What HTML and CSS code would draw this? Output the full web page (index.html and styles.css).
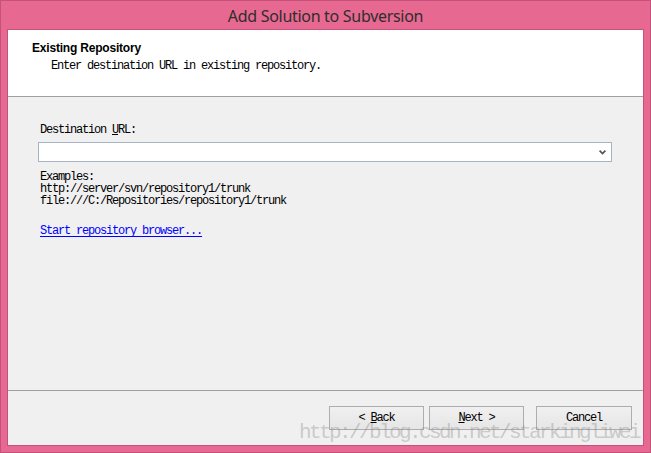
FILE: index.html
```html
<!DOCTYPE html>
<html>
<head>
<meta charset="utf-8">
<title>Add Solution to Subversion</title>
<link rel="stylesheet" href="styles.css">
</head>
<body>
<div class="window">
  <div class="titlebar">Add Solution to Subversion</div>
  <div class="client">
    <div class="header">
      <div class="header-title">Existing Repository</div>
      <div class="header-sub">Enter destination URL in existing repository.</div>
    </div>
    <div class="body">
      <div class="label">Destination <u>U</u>RL:</div>
      <div class="combo">
        <svg class="chevron" width="7" height="5" viewBox="0 0 7 5"><path d="M0.6 0.6 L3.5 3.6 L6.4 0.6" fill="none" stroke="#555" stroke-width="1.7"/></svg>
      </div>
      <div class="examples">
        <div>Examples:</div>
        <div>http://server/svn/repository1/trunk</div>
        <div>file:///C:/Repositories/repository1/trunk</div>
      </div>
      <a class="link" href="#">Start repository browser...</a>
    </div>
    <div class="footer">
      <div class="btn-group">
        <button class="btn">&lt; <u>B</u>ack</button>
        <button class="btn"><u>N</u>ext &gt;</button>
      </div>
      <button class="btn btn-cancel">Cancel</button>
    </div>
  </div>
  <div class="watermark">http://blog.csdn.net/starkingliwei</div>
</div>
</body>
</html>
```

FILE: styles.css
```css
html, body {
  margin: 0;
  padding: 0;
  background: #e76991;
}

.window {
  position: relative;
  width: 651px;
  height: 453px;
  box-sizing: border-box;
  border: 1px solid #c4527b;
  background: #e76991;
  padding: 0 6px 6px 6px;
  display: flex;
  flex-direction: column;
  overflow: hidden;
}

.titlebar {
  height: 28px;
  flex: none;
  display: flex;
  align-items: center;
  justify-content: center;
  font-family: "Noto Sans", "Open Sans", sans-serif;
  font-size: 16px;
  letter-spacing: -0.3px;
  color: #2e2e2e;
  padding-top: 1px;
  box-sizing: border-box;
}

.client {
  flex: 1;
  border: 1px solid #c4527b;
  background: #f0f0f0;
  display: flex;
  flex-direction: column;
  min-height: 0;
}

.header {
  flex: none;
  background: #ffffff;
  border-bottom: 1px solid #a0a0a0;
  padding: 11px 0 0 24px;
  box-sizing: content-box;
  height: 55px;
}

.header-title {
  font-family: "Liberation Sans", Arial, sans-serif;
  font-weight: bold;
  font-size: 12px;
  line-height: 14px;
  color: #000;
  letter-spacing: -0.2px;
}

.header-sub,
.label,
.examples,
.link,
.btn {
  font-family: "Liberation Mono", "Courier New", monospace;
  font-size: 12px;
  letter-spacing: -1.2px;
  color: #000;
}

.header-sub {
  margin: 4px 0 0 19px;
  line-height: 14px;
}

.body {
  flex: 1;
  padding: 27px 31px 0 30px;
  display: flex;
  flex-direction: column;
  align-items: flex-start;
}

.label {
  line-height: 12px;
  margin-left: 2px;
}

.label u {
  text-underline-offset: 1px;
}

.combo {
  margin-top: 6px;
  align-self: stretch;
  height: 18px;
  background: #ffffff;
  border: 1px solid #a6b3c5;
  display: flex;
  align-items: center;
  justify-content: flex-end;
  padding-right: 5px;
}

.chevron {
  display: block;
  margin-top: 1px;
}

.examples {
  margin: 9px 0 0 2px;
  line-height: 12px;
}

.link {
  margin: 18px 0 0 2px;
  line-height: 12px;
  color: #0000ff;
  text-decoration: underline;
  text-underline-offset: 2px;
}

.footer {
  height: 39px;
  flex: none;
  border-top: 1px solid #a0a0a0;
  padding: 15px 11px 0 0;
  display: flex;
  justify-content: flex-end;
  align-items: flex-start;
  gap: 12px;
}

.btn-group {
  display: flex;
  gap: 5px;
}

.btn {
  width: 95px;
  height: 24px;
  margin: 0;
  padding: 0;
  border: 1px solid #adadad;
  background: linear-gradient(#f0f0f0, #e6e6e6);
  line-height: 23px;
  text-align: center;
  cursor: default;
}

.btn u {
  text-underline-offset: 1px;
}

.btn-cancel {
  width: 96px;
}

.watermark {
  position: absolute;
  left: 298px;
  top: 420px;
  font-family: "Liberation Mono", "Courier New", monospace;
  font-size: 21px;
  letter-spacing: -2.6px;
  line-height: 24px;
  color: rgba(140, 140, 140, 0.4);
  white-space: nowrap;
  pointer-events: none;
}
```
